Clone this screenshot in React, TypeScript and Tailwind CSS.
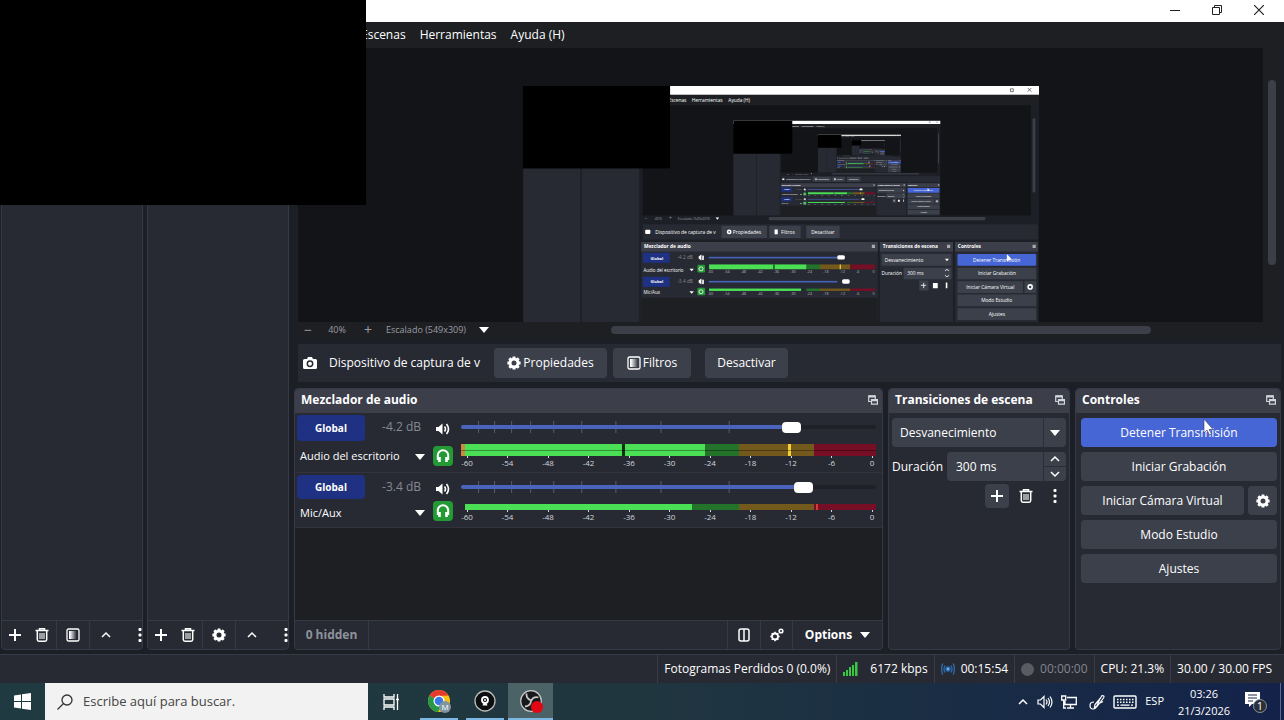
import { ReactNode } from "react";

const icon = {
  fill: "none",
  stroke: "currentColor",
  strokeWidth: 2,
  "aria-hidden": true,
};

const PlusIcon = () => (
  <svg {...icon} viewBox="0 0 14 14" className="h-3.5 w-3.5">
    <path d="M7 1v12M1 7h12" />
  </svg>
);

const TrashIcon = () => (
  <svg {...icon} viewBox="0 0 14 14" className="h-3.5 w-3.5">
    <path d="M.5 2.5h13M4.5 2V.8h5V2" strokeWidth="1.5" />
    <path d="M2.3 3v8.6q0 1.6 1.6 1.6h6.2q1.6 0 1.6-1.6V3" strokeWidth="1.5" />
    <path d="M5 5v6M7 5v6M9 5v6" strokeWidth="1.1" />
  </svg>
);

const GearIcon = () => (
  <svg {...icon} viewBox="0 0 14 14" className="h-3.5 w-3.5">
    <circle cx="7" cy="7" r="4" strokeWidth="3" />
    <path
      d="M7 .4v2M7 11.6v2M.4 7h2M11.6 7h2M2.3 2.3l1.4 1.4M10.3 10.3l1.4 1.4M2.3 11.7l1.4-1.4M10.3 3.7l1.4-1.4"
      strokeWidth="2.8"
    />
  </svg>
);

const GearsIcon = () => (
  <svg {...icon} viewBox="0 0 14 14" className="h-3.5 w-3.5">
    <circle cx="5" cy="8.5" r="3" strokeWidth="1.8" />
    <path
      d="M5 3.8v1.6M5 11.6v1.6M.3 8.5h1.6M8.1 8.5h1.6M1.7 5.2l1.1 1.1M7.2 10.7l1.1 1.1M1.7 11.8l1.1-1.1M7.2 6.3l1.1-1.1"
      strokeWidth="1.5"
    />
    <circle cx="11" cy="3" r="1.8" strokeWidth="1.6" />
  </svg>
);

const FilterIcon = () => (
  <svg {...icon} viewBox="0 0 14 14" className="h-3.5 w-3.5">
    <defs>
      <linearGradient id="filter-fade">
        <stop offset="0.1" stopColor="#fff" />
        <stop offset="1" stopColor="#fff" stopOpacity="0.1" />
      </linearGradient>
    </defs>
    <rect x="1" y="1" width="12" height="12" rx="1.5" strokeWidth="1.3" />
    <rect x="3" y="3" width="7" height="8" fill="url(#filter-fade)" stroke="none" />
  </svg>
);

const DotsIcon = () => (
  <svg viewBox="0 0 4 14" fill="currentColor" className="h-3.5 w-1" aria-hidden>
    <rect x=".5" y="0" width="3" height="3" rx="1" />
    <rect x=".5" y="5.5" width="3" height="3" rx="1" />
    <rect x=".5" y="11" width="3" height="3" rx="1" />
  </svg>
);

const ChevronIcon = ({ down }: { down?: boolean }) => (
  <svg {...icon} viewBox="0 0 12 8" className="h-2 w-3">
    <path d={down ? "M2 2l4 4 4-4" : "M2 6l4-4 4 4"} strokeWidth="1.5" />
  </svg>
);

const CaretIcon = () => (
  <svg viewBox="0 0 10 6" fill="currentColor" className="h-1.5 w-2.5" aria-hidden>
    <path d="M0 0h10L5 6z" />
  </svg>
);

const SpeakerIcon = () => (
  <svg {...icon} viewBox="0 0 14 12" className="h-3 w-3.5">
    <path d="M0 4h2.5l4-3.5v11L2.5 8H0z" fill="currentColor" stroke="none" />
    <path d="M8.5 3.5q2 2.5 0 5M10.5 1q4 5 0 10" strokeWidth="1.6" />
  </svg>
);

const HeadphonesIcon = () => (
  <svg {...icon} viewBox="0 0 14 14" className="h-3.5 w-3.5">
    <path d="M1.8 11V6.5a5.2 5.2 0 0 1 10.4 0V11" />
    <path d="M3.5 8v5M10.5 8v5" strokeWidth="2.6" />
  </svg>
);

const CameraIcon = () => (
  <svg viewBox="0 0 14 12" className="h-3 w-3.5" aria-hidden>
    <path
      d="M1.5 2H4l1-2h4l1 2h2.5Q14 2 14 3.5v7q0 1.5-1.5 1.5h-11Q0 12 0 10.5v-7Q0 2 1.5 2z"
      fill="#fff"
    />
    <circle cx="7" cy="6.8" r="2.7" fill="#fff" stroke="#272a33" strokeWidth="1.5" />
  </svg>
);

const FloatIcon = () => (
  <svg {...icon} viewBox="0 0 10 10" className="h-2.5 w-2.5">
    <path d="M3 6.5H.7V.8h6.6V4" strokeWidth="1.2" />
    <path d="M.7 1.5h6.6M3.5 5.3h6" strokeWidth="2" />
    <path d="M3.5 4.7h5.9v4.5H3.5z" strokeWidth="1.2" />
  </svg>
);

const meterMarks = ["-60", "-54", "-48", "-42", "-36", "-30", "-24", "-18", "-12", "-6", "0"];
const faderMarks = [17, 33, 50, 69, 92, 120, 154, 199, 267];

const channels = [
  { name: "Audio del escritorio", db: "-4.2 dB", value: 81, level: 58.8, peak: 78.8, peakColor: "#f5cf3a", hold: 38.8, stereo: true },
  { name: "Mic/Aux", db: "-3.4 dB", value: 84, level: 55.6, peak: 85.5, peakColor: "#d83a3a", hold: 0, stereo: false },
];

const captureLabels = [
  { x: 362, y: 39, text: "Escenas" },
  { x: 420, y: 39, text: "Herramientas" },
  { x: 511, y: 39, text: "Ayuda (H)" },
  { x: 329, y: 368, text: "Dispositivo de captura de v" },
  { x: 522, y: 368, text: "Propiedades" },
  { x: 642, y: 368, text: "Filtros" },
  { x: 717, y: 368, text: "Desactivar" },
  { x: 301, y: 404, text: "Mezclador de audio", bold: true },
  { x: 895, y: 404, text: "Transiciones de escena", bold: true },
  { x: 1082, y: 404, text: "Controles", bold: true },
  { x: 317, y: 432, text: "Global", bold: true, size: 10 },
  { x: 317, y: 491, text: "Global", bold: true, size: 10 },
  { x: 384, y: 430, text: "-4.2 dB", color: "#888" },
  { x: 384, y: 490, text: "-3.4 dB", color: "#888" },
  { x: 300, y: 462, text: "Audio del escritorio", size: 11 },
  { x: 300, y: 518, text: "Mic/Aux", size: 11 },
  { x: 303, y: 334, text: "−", color: "#999" },
  { x: 328, y: 334, text: "40%", color: "#999", size: 9 },
  { x: 363, y: 334, text: "+", color: "#999" },
  { x: 385, y: 334, text: "Escalado (549x309)", color: "#999", size: 9 },
  { x: 900, y: 437, text: "Desvanecimiento" },
  { x: 892, y: 471, text: "Duración" },
  { x: 956, y: 471, text: "300 ms" },
  { x: 1120, y: 437, text: "Detener Transmisión" },
  { x: 1132, y: 471, text: "Iniciar Grabación" },
  { x: 1103, y: 505, text: "Iniciar Cámara Virtual" },
  { x: 1140, y: 538, text: "Modo Estudio" },
  { x: 1159, y: 572, text: "Ajustes" },
];

// The captured desktop, which contains its own preview again.
// Past the second level the labels are too small to read, so they become strokes.
const Capture = ({ depth }: { depth: number }) => (
  <g fontFamily="Open Sans" fill="#fff">
    <rect width="1284" height="720" fill="#1d1f26" />
    <rect width="1284" height="22" fill="#fff" />
    <path d="M1213 7h7v7h-7zM1256 5l9 9M1265 5l-9 9" stroke="#222" fill="none" strokeWidth="1.5" />
    <rect y="22" width="1284" height="26" fill="#1d1f23" />
    <rect x="298" y="48" width="966" height="274" fill="#131418" />
    {depth > 0 && (
      <svg x="523" y="86" width="516" height="236" viewBox="0 0 1284 587">
        <Capture depth={depth - 1} />
      </svg>
    )}
    <rect x="1268" y="80" width="7" height="185" rx="3" fill="#3c3e48" />
    <rect x="611" y="326" width="540" height="8" rx="4" fill="#3c3e48" />
    <path d="M1 205h142v445H1zM147 205h142v445H147z" fill="#272a33" />
    <path d="M479 327h9l-4 6z" />
    <rect x="298" y="344" width="983" height="38" fill="#272a33" />
    <path d="M494 348h113v30H494zM613 348h78v30h-78zM705 348h83v30h-83z" fill="#3c404b" />
    <rect x="304" y="358" width="13" height="10" rx="2" />
    <circle cx="513" cy="363" r="4" fill="none" stroke="#fff" strokeWidth="4" />
    <rect x="626" y="357" width="8" height="12" />
    <path d="M294 388h589v262H294zM888 388h182v262H888zM1075 388h206v262h-206z" fill="#272a33" />
    <path d="M294 388h589v24H294zM888 388h182v24H888zM1075 388h206v24h-206z" fill="#3c3e4a" />
    <rect x="295" y="527" width="587" height="93" fill="#1d1f23" />
    <path d="M868 395h8v8h-8zM1055 395h8v8h-8zM1268 395h8v8h-8z" fill="#aaa" />
    {channels.map((c, i) => (
      <g key={c.name}>
        <rect x="298" y={415 + i * 60} width="67" height="25" fill="#1f3182" />
        <path d={`M437 ${424 + i * 60}l7-5v15l-7-5z`} />
        <rect x="446" y={422 + i * 60} width="4" height="11" />
        <path d={`M414 ${455 + i * 56}h11l-5 6z`} />
        <rect x="434" y={445 + i * 57} width="19" height="19" rx="3" fill="#249a35" />
        <circle cx="443" cy={455 + i * 57} r="5" fill="none" stroke="#fff" strokeWidth="2" />
        <rect x="462" y={425 + i * 60} width="320" height="4" fill="#4662b8" />
        <rect x={782 + i * 12} y={421 + i * 60} width="19" height="11" rx="4" />
        <rect x="705" y={444 + i * 60} width="34" height={12 - i * 6} fill="#23742a" />
        <rect x="739" y={444 + i * 60} width="75" height={12 - i * 6} fill="#74591c" />
        <rect x="814" y={444 + i * 60} width="62" height={12 - i * 6} fill="#760f25" />
        <rect x="463" y={444 + i * 60} width={242 - i * 13} height={12 - i * 6} fill="#4bdf56" />
        {i === 0 && <path d="M623 444h3v12h-3z" fill="#10320f" />}
        {i === 0 && <path d="M788 444h3v12h-3z" fill="#f5cf3a" />}
        {meterMarks.map((m, n) =>
          depth > 1 ? (
            <text key={m} x={460 + n * 41} y={466 + i * 54} fontSize="9" fill="#bbb">{m}</text>
          ) : (
            <rect key={m} x={462 + n * 41} y={458 + i * 54} width="8" height="7" fill="#8a8c92" />
          )
        )}
      </g>
    ))}
    <g fill="#3c404b">
      <path d="M892 418h174v29H892zM947 452h119v29H947zM986 484h23v25h-23z" />
      <path d="M1081 452h196v29h-196zM1081 486h163v29h-163zM1248 486h29v29h-29zM1081 519h196v29h-196zM1081 553h196v29h-196z" />
    </g>
    <rect x="1081" y="418" width="196" height="29" rx="3" fill="#4766d6" />
    <path d="M1050 430h10l-5 6zM1020 490h12v13h-12zM1052 489h4v14h-4z" />
    <path d="M997 490v13M990 496h13M1050 460l5-4 5 4M1050 471l5 4 5-4" stroke="#fff" strokeWidth="2" fill="none" />
    <circle cx="1262" cy="500" r="5" fill="none" stroke="#fff" strokeWidth="4" />
    {captureLabels.map(({ x, y, text, bold, size = 12, color = "#fff" }) =>
      depth > 1 ? (
        <text key={y + text} x={x} y={y} fontSize={size} fontWeight={bold ? 700 : 400} fill={color}>
          {text}
        </text>
      ) : (
        <rect key={y + text} x={x} y={y - 7} width={text.length * 6} height="6" fill={color} opacity="0.5" />
      )
    )}
    <path d="M1204 418v18l12-5z" />
    <rect width="366" height="205" fill="#000" />
  </g>
);

const ToolButton = ({
  label,
  className,
  children,
}: {
  label: string;
  className: string;
  children: ReactNode;
}) => (
  <button aria-label={label} className={`flex h-full shrink-0 items-center justify-center ${className}`}>
    {children}
  </button>
);

const SideDock = ({ third, thirdLabel }: { third: ReactNode; thirdLabel: string }) => (
  <section className="flex w-[142px] flex-col rounded-b border border-[#363a47] bg-[#272a33]">
    <div className="flex-1" />
    <div className="flex h-[29px] border-t border-[#363a47]">
      <ToolButton label="Añadir" className="w-[26px]"><PlusIcon /></ToolButton>
      <ToolButton label="Eliminar" className="w-7"><TrashIcon /></ToolButton>
      <ToolButton label={thirdLabel} className="w-[34px] border-x border-[#363a47]">{third}</ToolButton>
      <ToolButton label="Subir" className="w-8"><ChevronIcon /></ToolButton>
      <ToolButton label="Más" className="ml-auto w-1"><DotsIcon /></ToolButton>
    </div>
  </section>
);

const Dock = ({
  title,
  className,
  children,
}: {
  title: string;
  className: string;
  children: ReactNode;
}) => (
  <section className={`flex flex-col rounded border border-[#363a47] bg-[#272a33] ${className}`}>
    <header className="flex h-6 shrink-0 items-center justify-between rounded-t bg-[#3c3e4a] pr-1 pb-[3px] pl-1.5">
      <h2 className="text-xs font-bold">{title}</h2>
      <button aria-label="Desacoplar" className="text-gray-300"><FloatIcon /></button>
    </header>
    {children}
  </section>
);

const Zone = ({ left, width, color }: { left: number; width: number; color: string }) => (
  <div className="absolute inset-y-0" style={{ left: `${left}%`, width: `${width}%`, background: color }} />
);

const Channel = ({ channel }: { channel: (typeof channels)[number] }) => {
  const { name, db, value, level, peak, peakColor, hold, stereo } = channel;
  return (
    <div className={`flex border-b border-[#30333d] pr-1.5 pl-0.5 ${stereo ? "h-[60px]" : "h-[55px]"}`}>
      <div className="flex w-32 flex-col">
        <div className="flex items-start justify-between pt-0.5">
          <button className={`w-[68px] rounded-sm bg-[#1f3182] text-[10px] font-bold ${stereo ? "h-[26px]" : "h-6"}`}>
            Global
          </button>
          <span className="mr-1 text-xs leading-6 text-[#868993]">{db}</span>
        </div>
        <button className="flex flex-1 items-center justify-between pl-[3px] text-[11px]">
          {name}
          <CaretIcon />
        </button>
      </div>
      <div className="ml-2 flex w-5 flex-col items-center justify-between py-1.5">
        <button aria-label={`Silenciar ${name}`} className="flex h-5 items-center"><SpeakerIcon /></button>
        <button
          aria-label={`Monitorizar ${name}`}
          className="flex h-5 w-5 shrink-0 items-center justify-center rounded-sm bg-[#249a35]"
        >
          <HeadphonesIcon />
        </button>
      </div>
      <div className="ml-2 min-w-0 flex-1">
        <div className="relative flex h-7 items-center">
          <svg viewBox="0 0 414 12" preserveAspectRatio="none" className="absolute h-3 w-full" aria-hidden>
            {faderMarks.map((x) => (
              <path key={x} d={`M${x + 0.5} 0v12`} stroke="#565b70" />
            ))}
          </svg>
          <input
            type="range"
            aria-label={`Volumen de ${name}`}
            defaultValue={value}
            className="relative h-1 w-full appearance-none rounded-sm [&::-webkit-slider-thumb]:h-[11px] [&::-webkit-slider-thumb]:w-[19px] [&::-webkit-slider-thumb]:appearance-none [&::-webkit-slider-thumb]:rounded [&::-webkit-slider-thumb]:bg-white"
            style={{ background: `linear-gradient(90deg, #4a63bd ${value}%, #1f2129 ${value}%)` }}
          />
        </div>
        <div className={`relative mt-[3px] bg-[#23742a] ${stereo ? "h-3" : "h-1.5"}`}>
          <Zone left={67} width={18} color="#74591c" />
          <Zone left={85} width={15} color="#760f25" />
          <Zone left={1} width={level - 1} color="#4bdf56" />
          <Zone left={0} width={1} color={stereo ? "#c98d3d" : "#272a33"} />
          {hold > 0 && <Zone left={hold} width={0.7} color="#10320f" />}
          <Zone left={peak} width={0.6} color={peakColor} />
          {stereo && <div className="absolute inset-x-0 top-1.5 h-px bg-black/35" />}
        </div>
        <div className="-mr-2 -ml-1.5 flex justify-between text-[8px] leading-3 text-gray-300">
          {meterMarks.map((m) => (
            <span key={m} className="flex w-6 flex-col items-center">
              <i className="h-0.5 w-px bg-gray-300" />
              <span className="leading-[9px]">{m}</span>
            </span>
          ))}
        </div>
      </div>
    </div>
  );
};

const controlButton = "h-[29px] rounded bg-[#3c404b] text-xs";

const StatusItem = ({ children }: { children: ReactNode }) => (
  <div className="flex items-center gap-1.5 border-l border-[#3a3d49] px-1.5">{children}</div>
);

const Taskbar = () => (
  <footer className="flex h-[37px] shrink-0 items-stretch bg-linear-to-r from-[#1f3a40] via-[#20363f] to-[#14224a]">
    <button aria-label="Inicio" className="flex w-[45px] items-center justify-center">
      <svg viewBox="0 0 17 17" fill="#fff" className="h-[17px] w-[17px]">
        <path d="M0 2.5l7-1V8H0zM8 1.3L17 0v8H8zM0 9h7v6.5l-7-1zM8 9h9v8l-9-1.3z" />
      </svg>
    </button>
    <label className="flex w-[323px] items-center gap-2.5 bg-[#f2f2f2] pl-3 text-[#333]">
      <svg {...icon} viewBox="0 0 16 16" className="h-4 w-4 shrink-0">
        <circle cx="10" cy="6" r="5" strokeWidth="1.3" />
        <path d="M6.5 9.5l-6 6" strokeWidth="1.3" />
      </svg>
      <input
        aria-label="Buscar"
        placeholder="Escribe aquí para buscar."
        className="w-full bg-transparent text-[13px] outline-none placeholder:text-[#444]"
      />
    </label>
    <button aria-label="Vista de tareas" className="flex w-[46px] items-center justify-center">
      <svg {...icon} viewBox="0 0 16 16" className="h-4 w-4" strokeWidth="1.3">
        <path d="M1 5h10v6H1zM1 0v3h10V0M1 16v-3h10v3M14.5 0v16M13 5.5h3" />
      </svg>
    </button>
    <button aria-label="Chrome" className="ml-1.5 flex w-[38px] items-center justify-center border-b-2 border-[#7db8e4]">
      <svg viewBox="0 0 24 24" className="h-6 w-6">
        <circle cx="12" cy="12" r="11" fill="#fbc116" />
        <path d="M12 12L2.5 6.5A11 11 0 0 1 21.5 6.5L12 7z" fill="#e33b2e" />
        <path d="M2.5 6.5A11 11 0 0 0 11 23l5-9-4-2z" fill="#279847" />
        <circle cx="12" cy="12" r="5.5" fill="#fff" />
        <circle cx="12" cy="12" r="4.3" fill="#3b78e7" />
        <circle cx="18" cy="18" r="6" fill="#7f949f" />
        <text x="18" y="21" fontSize="8" textAnchor="middle" fill="#fff">M</text>
      </svg>
    </button>
    <button aria-label="Cámara" className="ml-2 flex w-[38px] items-center justify-center border-b-2 border-[#7db8e4]">
      <svg viewBox="0 0 22 22" className="h-[22px] w-[22px]">
        <circle cx="11" cy="11" r="10" fill="#0c0e10" stroke="#bbb" strokeWidth="1.3" />
        <circle cx="11" cy="10" r="3" fill="none" stroke="#fff" strokeWidth="1.8" />
        <circle cx="11" cy="10" r="1" fill="#fff" />
        <path d="M9.5 13h3l1 2.5h-5z" fill="#fff" />
      </svg>
    </button>
    <button aria-label="OBS" className="ml-1 flex w-[45px] items-center justify-center border-b-2 border-[#7db8e4] bg-[#4b6266]">
      <svg viewBox="0 0 24 24" className="h-6 w-6">
        <circle cx="12" cy="12" r="10.3" fill="#17191b" stroke="#c8c8c8" strokeWidth="1.2" />
        <g fill="none" stroke="#c8c8c8" strokeWidth="1.8">
          <path d="M7.5 4.5q-.5 5 4.5 7" />
          <path d="M19.5 8.5q-5-1.5-7.5 3.5" />
          <path d="M6 17.5q5.500-.5 6-5.500" />
        </g>
        <circle cx="18" cy="18" r="6" fill="#e30613" />
      </svg>
    </button>
    <div className="ml-auto flex items-center gap-2 pr-[3px]">
      <button aria-label="Iconos ocultos"><ChevronIcon /></button>
      <svg {...icon} viewBox="0 0 16 14" className="h-3.5 w-4" strokeWidth="1.2">
        <path d="M1 5h2.5L7 1.5v11L3.5 9H1zM9 4.5q2 2.5 0 5M11 3q3 4 0 8M13 1.5q4 5.5 0 11" />
      </svg>
      <svg {...icon} viewBox="0 0 16 14" className="h-3.5 w-4" strokeWidth="1.3">
        <path d="M6 2.5h9.3v7H4V6M9.5 9.5V13M6 13h7M.7 1h4v4h-4zM2.7 5v8H5" />
      </svg>
      <svg {...icon} viewBox="0 0 16 16" className="ml-1 h-4 w-4" strokeWidth="1.2">
        <path d="M5 8Q1 8 1 11.5T4 15q3 0 4.5-4.5T13 1.5q3 0 1.5 2.5L8 12.5l-2.5.5.5-2.5 6-7M11 9l3-1.5" />
      </svg>
      <svg {...icon} viewBox="0 0 24 14" className="h-3.5 w-6">
        <rect x="1" y="1" width="22" height="12" rx="1" strokeWidth="1.4" />
        <path d="M4 4.5h17M4 7.3h17" strokeWidth="1.5" strokeDasharray="1.5 1.5" />
        <path d="M4 10.2h2M7.5 10.2h9M18 10.2h2" strokeWidth="1.3" />
      </svg>
      <span className="text-[11px]">ESP</span>
      <div className="mx-1 w-14 text-center text-[11px] leading-[17px]">
        <div>03:26</div>
        <div>21/3/2026</div>
      </div>
      <button aria-label="Notificaciones">
        <svg viewBox="0 0 24 24" className="h-6 w-6">
          <path d="M1 2h15v12H8l-3 3v-3H1z" fill="#fff" />
          <path d="M4 5h9M4 8h9M4 11h5" stroke="#1a2a4a" />
          <circle cx="16" cy="16" r="6.5" fill="#2a3038" stroke="#8b8f96" />
          <text x="16" y="20" fontSize="11" textAnchor="middle" fill="#fff">1</text>
        </svg>
      </button>
      <i className="ml-1 h-full w-px bg-[#5d6b8c]" />
    </div>
  </footer>
);

const App = () => {
  return (
    <div className="relative flex h-screen flex-col overflow-hidden bg-[#1d1f26] font-['Open_Sans',sans-serif] text-white">
      <header className="flex h-[22px] shrink-0 items-center justify-end gap-8 bg-white pr-5 pb-0.5 text-[#222]">
        <button aria-label="Minimizar">
          <svg {...icon} viewBox="0 0 10 10" className="h-2.5 w-2.5"><path d="M0 5.5h10" strokeWidth="1" /></svg>
        </button>
        <button aria-label="Restaurar">
          <svg {...icon} viewBox="0 0 10 10" className="h-2.5 w-2.5" strokeWidth="1">
            <path d="M.5 2.5h7v7h-7zM2.5 2.5v-2h7v7h-2" />
          </svg>
        </button>
        <button aria-label="Cerrar">
          <svg {...icon} viewBox="0 0 10 10" className="h-2.5 w-2.5" strokeWidth="1.2"><path d="M0 0l10 10M10 0L0 10" /></svg>
        </button>
      </header>
      <nav className="flex h-[26px] shrink-0 items-center gap-3.5 bg-[#1d1f23] pl-[361px] text-xs">
        <button>Escenas</button>
        <button>Herramientas</button>
        <button>Ayuda (H)</button>
      </nav>

      <main className="flex min-h-0 flex-1 pb-1">
        <div className="flex gap-1 px-px">
          <SideDock thirdLabel="Filtros" third={<FilterIcon />} />
          <SideDock thirdLabel="Propiedades" third={<GearIcon />} />
        </div>
        <div className="ml-1 flex min-w-0 flex-1 flex-col pr-[3px]">
          <div className="ml-1 flex min-h-0 flex-1 bg-[#1d1f23]">
            <div className="flex min-w-0 flex-1 items-start justify-center overflow-hidden bg-[#131418] pt-[38px]">
              <svg viewBox="0 0 1284 720" className="w-[516px] shrink-0" role="img" aria-label="Vista previa">
                <Capture depth={3} />
              </svg>
            </div>
            <div className="flex w-[18px] justify-center pt-8">
              <div className="h-[185px] w-2 rounded bg-[#3c3e48]" />
            </div>
          </div>
          <div className="ml-1 flex h-4 shrink-0 items-center bg-[#1d1f23] text-[9px] text-[#9a9ca3]">
            <button aria-label="Alejar" className="w-5 text-sm leading-4">−</button>
            <span className="w-[38px] text-center">40%</span>
            <button aria-label="Acercar" className="w-6 text-sm leading-4">+</button>
            <button className="ml-1.5 flex w-[103px] items-center justify-between text-white">
              <span className="text-[#9a9ca3]">Escalado (549x309)</span>
              <CaretIcon />
            </button>
            <div className="ml-[122px] h-2 w-[540px] rounded bg-[#3c3e48]" />
          </div>

          <div className="mt-1.5 ml-1 flex h-[38px] shrink-0 items-center bg-[#272a33] pl-[5px] text-xs">
            <CameraIcon />
            <span className="ml-3 w-[165px] overflow-hidden whitespace-nowrap">Dispositivo de captura de v</span>
            <button className="flex h-[30px] w-[113px] items-center justify-center gap-0.5 rounded bg-[#3c404b]">
              <GearIcon />
              Propiedades
            </button>
            <button className="ml-1.5 flex h-[30px] w-[78px] items-center justify-center gap-0.5 rounded bg-[#3c404b]">
              <FilterIcon />
              Filtros
            </button>
            <button className="ml-3.5 h-[30px] w-[83px] rounded bg-[#3c404b]">Desactivar</button>
          </div>

          <div className="mt-1.5 flex h-[262px] shrink-0 gap-[5px]">
            <Dock title="Mezclador de audio" className="min-w-0 flex-1">
              {channels.map((c) => (
                <Channel key={c.name} channel={c} />
              ))}
              <div className="flex-1 bg-[#1d1f23]" />
              <div className="flex h-[29px] shrink-0 items-stretch border-t border-[#363a47] text-xs font-bold">
                <span className="flex w-[74px] items-center justify-center border-r border-[#363a47] text-[#8f929b]">
                  0 hidden
                </span>
                <button aria-label="Disposición" className="ml-auto flex w-[33px] items-center justify-center border-l border-[#363a47]">
                  <svg {...icon} viewBox="0 0 12 14" className="h-3.5 w-3" strokeWidth="1.5">
                    <rect x="1" y="1" width="10" height="12" rx="2" />
                    <path d="M6 1v12" />
                  </svg>
                </button>
                <button aria-label="Ajustes de audio" className="flex w-[33px] items-center justify-center border-x border-[#363a47]">
                  <GearsIcon />
                </button>
                <button className="flex w-[89px] items-center justify-center gap-2">
                  Options
                  <CaretIcon />
                </button>
              </div>
            </Dock>

            <Dock title="Transiciones de escena" className="w-[182px]">
              <div className="flex flex-col gap-[5px] px-[3px] pt-[5px] text-xs">
                <div className="relative flex">
                  <select
                    aria-label="Transición"
                    className="h-[29px] w-full appearance-none rounded bg-[#3c404b] pl-2"
                  >
                    <option>Desvanecimiento</option>
                  </select>
                  <span className="pointer-events-none absolute inset-y-0 right-0 flex w-[23px] items-center justify-center border-l border-[#2c2f39]">
                    <CaretIcon />
                  </span>
                </div>
                <div className="flex items-center justify-between">
                  <label htmlFor="duration">Duración</label>
                  <div className="flex h-[29px] w-[119px] rounded bg-[#3c404b]">
                    <input id="duration" defaultValue="300 ms" className="min-w-0 flex-1 bg-transparent pl-[9px] outline-none" />
                    <div className="flex w-[23px] flex-col divide-y divide-[#2c2f39] border-l border-[#2c2f39]">
                      <button aria-label="Aumentar" className="flex flex-1 items-center justify-center"><ChevronIcon /></button>
                      <button aria-label="Reducir" className="flex flex-1 items-center justify-center"><ChevronIcon down /></button>
                    </div>
                  </div>
                </div>
                <div className="-mt-0.5 flex h-6 justify-end">
                  <ToolButton label="Añadir transición" className="w-6 rounded bg-[#3c404b]"><PlusIcon /></ToolButton>
                  <ToolButton label="Eliminar transición" className="w-[34px]"><TrashIcon /></ToolButton>
                  <ToolButton label="Más opciones" className="w-[23px]"><DotsIcon /></ToolButton>
                </div>
              </div>
            </Dock>

            <Dock title="Controles" className="w-[206px]">
              <div className="flex flex-col gap-[5px] pt-[5px] pr-[3px] pl-[5px]">
                <div className="relative flex">
                  <button className="h-[29px] flex-1 rounded bg-[#4766d6] text-xs">Detener Transmisión</button>
                  <svg viewBox="0 0 12 18" className="absolute top-0 left-[62%] h-[18px] w-3" aria-hidden>
                    <path d="M1 1v14l3-3 2.5 5 2-1-2.5-4.5h4z" fill="#fff" stroke="#333a60" strokeWidth=".6" />
                  </svg>
                </div>
                <button className={controlButton}>Iniciar Grabación</button>
                <div className="flex gap-1">
                  <button className={`${controlButton} flex-1`}>Iniciar Cámara Virtual</button>
                  <button aria-label="Configurar cámara virtual" className={`${controlButton} flex w-[29px] items-center justify-center`}>
                    <GearIcon />
                  </button>
                </div>
                <button className={controlButton}>Modo Estudio</button>
                <button className={controlButton}>Ajustes</button>
              </div>
            </Dock>
          </div>
        </div>
      </main>

      <div className="flex h-[29px] shrink-0 justify-end border-t border-[#363a47] bg-[#272a33] pr-1.5 text-xs">
        <StatusItem>Fotogramas Perdidos 0 (0.0%)</StatusItem>
        <StatusItem>
          <svg viewBox="0 0 15 14" fill="#38c943" className="mr-1.5 h-3.5 w-[15px]" aria-hidden>
            <path d="M0 10h2v4H0zM3 8h2v6H3zM6 5h2v9H6zM9 3h2v11H9zM12 0h2.5v14H12z" />
          </svg>
          6172 kbps
        </StatusItem>
        <StatusItem>
          <svg {...icon} viewBox="0 0 14 12" className="h-3 w-3.5 text-[#2c6cb0]" strokeWidth="1.3">
            <circle cx="7" cy="6" r="2" fill="#6fb2f0" />
            <path d="M4 2.5q-2 3.5 0 7M10 2.5q2 3.5 0 7M1.800.5q-2.500 5.500 0 11M12.200.5q2.500 5.500 0 11" />
          </svg>
          00:15:54
        </StatusItem>
        <StatusItem>
          <span className="h-[13px] w-[13px] rounded-full bg-[#5a5c63]" />
          <span className="text-[#83868e]">00:00:00</span>
        </StatusItem>
        <StatusItem>CPU: 21.3%</StatusItem>
        <StatusItem>30.00 / 30.00 FPS</StatusItem>
      </div>
      <Taskbar />

      <div className="absolute top-0 left-0 h-[205px] w-[366px] bg-black" />
    </div>
  );
};

export default App;
